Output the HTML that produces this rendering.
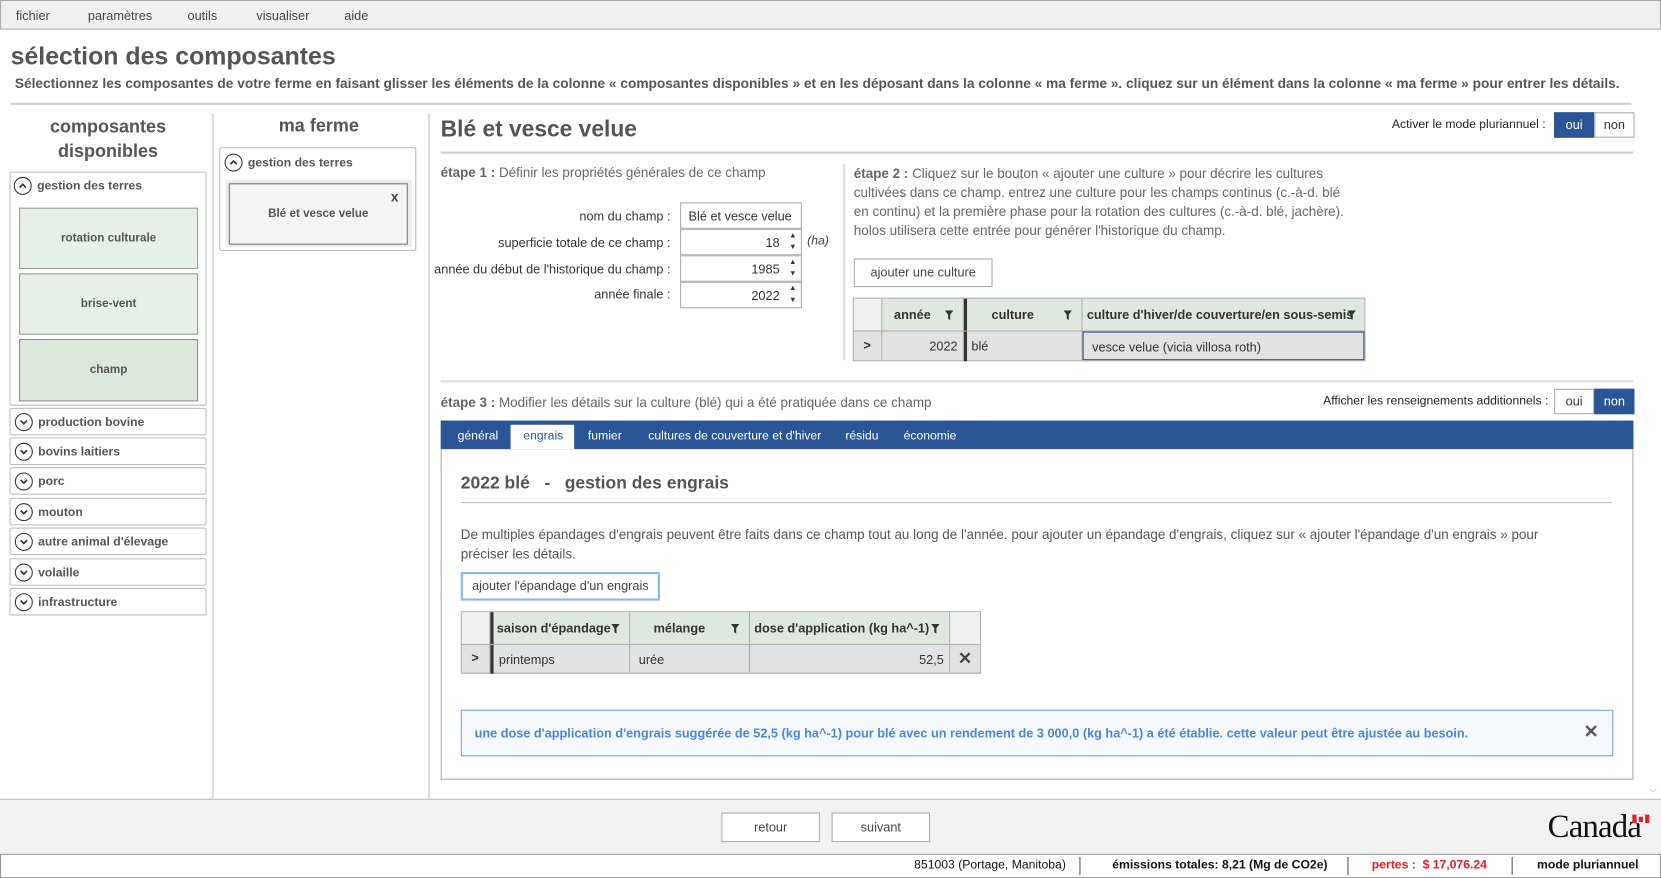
<!DOCTYPE html>
<html><head><meta charset="utf-8">
<style>
*{box-sizing:border-box;margin:0;padding:0}
html,body{width:1661px;height:878px;overflow:hidden;background:#fff}
#w{position:absolute;left:0;top:0;width:1568px;height:829px;transform:scale(1.0593);transform-origin:0 0;font-family:"Liberation Sans",sans-serif;font-size:12px;color:#444}
.a{position:absolute;white-space:nowrap}
.b{font-weight:bold}
.menu{left:0;top:0;width:1568px;height:28px;background:#f0f0f0;border:1px solid #aaa}
.box{position:absolute;border:1px solid #bbb;border-radius:2px;background:#fff}
.tile{position:absolute;border:1px solid #999;background:#e7f0e7;font-weight:bold;color:#555;text-align:center;font-size:11px}
.cat{position:absolute;left:9px;width:186px;height:26px;border:1px solid #bbb;border-radius:2px;font-weight:bold;font-size:11.5px;color:#555;padding:7px 0 0 26px}
.ci{position:absolute;left:4px;top:4px;width:17px;height:17px;border:1.3px solid #333;border-radius:50%}
.ci svg{position:absolute;left:3px;top:3px}
.inp{position:absolute;left:642px;width:115px;height:25px;border:1px solid #aaa;background:#fff;font-size:12px;color:#333}
.lbl{position:absolute;right:935px;font-size:12px;color:#333;text-align:right}
.tog{position:absolute;width:38px;height:24px;border:1px solid #aaa;text-align:center;line-height:22px;font-size:12px;color:#333;background:#fff}
.sel{background:#2a5597;color:#fff;border-color:#2a5597}
.th{position:absolute;background:#dfe8df;font-weight:bold;color:#333;font-size:12px;border-right:1px solid #aaa;height:100%}
.td{position:absolute;background:#e2e2e2;color:#333;font-size:12px;border-right:1px solid #aaa;height:100%}
.btn{position:absolute;border:1px solid #aaa;background:#fff;text-align:center;font-size:12px;color:#444}
.f{position:absolute;top:11px;right:9px}
</style></head><body><div id="w">
<div class="a menu"></div>
<div class="a" style="left:15px;top:8px">fichier</div>
<div class="a" style="left:83px;top:8px">paramètres</div>
<div class="a" style="left:177px;top:8px">outils</div>
<div class="a" style="left:242px;top:8px">visualiser</div>
<div class="a" style="left:325px;top:8px">aide</div>

<div class="a b" style="left:10px;top:40px;font-size:23.5px;color:#555">sélection des composantes</div>
<div class="a b" style="left:14px;top:71px;font-size:12.95px;color:#555">Sélectionnez les composantes de votre ferme en faisant glisser les éléments de la colonne « composantes disponibles » et en les déposant dans la colonne « ma ferme ». cliquez sur un élément dans la colonne « ma ferme » pour entrer les détails.</div>
<div class="a" style="left:10px;top:97px;width:1530px;height:2px;background:#ccc"></div>
<div class="a" style="left:200px;top:107px;width:2px;height:648px;background:#ddd"></div>
<div class="a" style="left:404px;top:107px;width:2px;height:648px;background:#ddd"></div>

<div class="a b" style="left:0;width:204px;top:108px;text-align:center;font-size:17px;line-height:23px;color:#555;white-space:normal">composantes<br>disponibles</div>
<div class="box" style="left:9px;top:162px;width:186px;height:221px"></div>
<div class="cat" style="top:163px;border:none"><div class="ci"><svg width="9" height="9" viewBox="0 0 9 9"><path d="M1.5 6 L4.5 3 L7.5 6" stroke="#333" stroke-width="1.6" fill="none"/></svg></div>gestion des terres</div>
<div class="tile" style="left:18px;top:196px;width:169px;height:58px;line-height:56px">rotation culturale</div>
<div class="tile" style="left:18px;top:258px;width:169px;height:58px;line-height:56px">brise-vent</div>
<div class="tile" style="left:18px;top:320px;width:169px;height:59px;line-height:57px;background:#dde8dd;border-color:#888">champ</div>

<div class="cat" style="top:385px"><div class="ci"><svg width="9" height="9" viewBox="0 0 9 9"><path d="M1.5 3 L4.5 6 L7.5 3" stroke="#333" stroke-width="1.6" fill="none"/></svg></div>production bovine</div>
<div class="cat" style="top:413px"><div class="ci"><svg width="9" height="9" viewBox="0 0 9 9"><path d="M1.5 3 L4.5 6 L7.5 3" stroke="#333" stroke-width="1.6" fill="none"/></svg></div>bovins laitiers</div>
<div class="cat" style="top:441px"><div class="ci"><svg width="9" height="9" viewBox="0 0 9 9"><path d="M1.5 3 L4.5 6 L7.5 3" stroke="#333" stroke-width="1.6" fill="none"/></svg></div>porc</div>
<div class="cat" style="top:470px"><div class="ci"><svg width="9" height="9" viewBox="0 0 9 9"><path d="M1.5 3 L4.5 6 L7.5 3" stroke="#333" stroke-width="1.6" fill="none"/></svg></div>mouton</div>
<div class="cat" style="top:498px"><div class="ci"><svg width="9" height="9" viewBox="0 0 9 9"><path d="M1.5 3 L4.5 6 L7.5 3" stroke="#333" stroke-width="1.6" fill="none"/></svg></div>autre animal d'élevage</div>
<div class="cat" style="top:527px"><div class="ci"><svg width="9" height="9" viewBox="0 0 9 9"><path d="M1.5 3 L4.5 6 L7.5 3" stroke="#333" stroke-width="1.6" fill="none"/></svg></div>volaille</div>
<div class="cat" style="top:555px"><div class="ci"><svg width="9" height="9" viewBox="0 0 9 9"><path d="M1.5 3 L4.5 6 L7.5 3" stroke="#333" stroke-width="1.6" fill="none"/></svg></div>infrastructure</div>

<div class="a b" style="left:206px;width:190px;top:109px;text-align:center;font-size:17px;color:#555">ma ferme</div>
<div class="box" style="left:207px;top:139px;width:186px;height:98px"></div>
<div class="cat" style="left:208px;top:141px;border:none"><div class="ci"><svg width="9" height="9" viewBox="0 0 9 9"><path d="M1.5 6 L4.5 3 L7.5 6" stroke="#333" stroke-width="1.6" fill="none"/></svg></div>gestion des terres</div>
<div class="a" style="left:213px;top:170px;width:176px;height:63px;background:#ececec"></div>
<div class="tile" style="left:216px;top:173px;width:169px;height:58px;line-height:56px;background:#f4f4f4;border-color:#777">Blé et vesce velue</div>
<div class="a b" style="left:369px;top:178px;font-size:13px;color:#444">x</div>

<div class="a b" style="left:416px;top:110px;font-size:21.5px;color:#555">Blé et vesce velue</div>
<div class="a" style="left:1314px;top:112px;font-size:11.5px;color:#222">Activer le mode pluriannuel :</div>
<div class="tog sel" style="left:1467px;top:106px">oui</div>
<div class="tog" style="left:1505px;top:106px">non</div>
<div class="a" style="left:416px;top:143px;width:1126px;height:2px;background:#ccc"></div>

<div class="a" style="left:416px;top:156px;font-size:12.7px;color:#666"><b>étape 1 :</b> Définir les propriétés générales de ce champ</div>
<div class="lbl" style="top:197px">nom du champ :</div>
<div class="lbl" style="top:222px">superficie totale de ce champ :</div>
<div class="lbl" style="top:247px">année du début de l'historique du champ :</div>
<div class="lbl" style="top:271px">année finale :</div>
<div class="inp" style="top:191px;padding:5px 7px">Blé et vesce velue</div>
<div class="inp" style="top:216px;text-align:right;padding:5px 20px">18</div>
<div class="inp" style="top:241px;text-align:right;padding:5px 20px">1985</div>
<div class="inp" style="top:266px;text-align:right;padding:5px 20px">2022</div>
<div class="a" style="left:745px;top:217px;font-size:7px;line-height:11px;color:#333">▲<br>▼</div>
<div class="a" style="left:745px;top:242px;font-size:7px;line-height:11px;color:#333">▲<br>▼</div>
<div class="a" style="left:745px;top:267px;font-size:7px;line-height:11px;color:#333">▲<br>▼</div>
<div class="a" style="left:762px;top:222px;font-style:italic;font-size:11.5px;color:#444">(ha)</div>
<div class="a" style="left:796px;top:155px;width:2px;height:185px;background:#ddd"></div>

<div class="a" style="left:806px;top:155px;font-size:12.7px;line-height:18px;color:#666;white-space:normal;width:476px"><b>étape 2 :</b> Cliquez sur le bouton « ajouter une culture » pour décrire les cultures cultivées dans ce champ. entrez une culture pour les champs continus (c.-à-d. blé en continu) et la première phase pour la rotation des cultures (c.-à-d. blé, jachère). holos utilisera cette entrée pour générer l'historique du champ.</div>
<div class="btn" style="left:806px;top:244px;width:131px;height:27px;line-height:25px">ajouter une culture</div>

<div class="a" style="left:805px;top:281px;width:484px;height:60px;border:1px solid #aaa;background:#f0f0f0"></div>
<div class="a" style="left:806px;top:282px;width:482px;height:30px">
 <div class="th" style="left:0;width:27px;background:#f0f0f0"></div>
 <div class="th" style="left:27px;width:77px;padding:8px 0 0 11px">année<svg class="f" width="8" height="9" viewBox="0 0 8 9"><path d="M0 0H8L5 4V9L3 8V4Z" fill="#333"/></svg></div>
 <div class="a" style="left:104px;top:0;width:3px;height:30px;background:#333"></div>
 <div class="th" style="left:107px;width:109px;padding:8px 0 0 23px">culture<svg class="f" width="8" height="9" viewBox="0 0 8 9"><path d="M0 0H8L5 4V9L3 8V4Z" fill="#333"/></svg></div>
 <div class="th" style="left:216px;width:266px;padding:8px 0 0 4px;border-right:none">culture d'hiver/de couverture/en sous-semis<svg class="f" width="8" height="9" viewBox="0 0 8 9" style="right:8px"><path d="M0 0H8L5 4V9L3 8V4Z" fill="#333"/></svg></div>
</div>
<div class="a" style="left:806px;top:312px;width:482px;height:28px;border-top:1px solid #aaa">
 <div class="td" style="left:0;width:27px;padding:6px 0 0 9px;font-weight:bold">&gt;</div>
 <div class="td" style="left:27px;width:77px;text-align:right;padding:7px 5px 0 0">2022</div>
 <div class="a" style="left:104px;top:0;width:3px;height:28px;background:#333"></div>
 <div class="td" style="left:107px;width:109px;padding:7px 0 0 4px">blé</div>
 <div class="td" style="left:216px;width:266px;padding:7px 0 0 8px;border:1px solid #2a5597">vesce velue (vicia villosa roth)</div>
</div>

<div class="a" style="left:416px;top:359px;width:1126px;height:2px;background:#ddd"></div>
<div class="a" style="left:416px;top:373px;font-size:12.7px;color:#666"><b>étape 3 :</b> Modifier les détails sur la culture (blé) qui a été pratiquée dans ce champ</div>
<div class="a" style="left:1249px;top:373px;font-size:11.5px;color:#222">Afficher les renseignements additionnels :</div>
<div class="tog" style="left:1467px;top:367px">oui</div>
<div class="tog sel" style="left:1505px;top:367px">non</div>

<div class="a" style="left:416px;top:397px;width:1126px;height:27px;background:#2a5597"></div>
<div class="a" style="left:482px;top:401px;width:60px;height:23px;background:#fff"></div>
<div class="a" style="left:432px;top:406px;color:#fff;font-size:11.5px">général</div>
<div class="a" style="left:494px;top:406px;color:#2a5597;font-size:11.5px">engrais</div>
<div class="a" style="left:555px;top:406px;color:#fff;font-size:11.5px">fumier</div>
<div class="a" style="left:612px;top:406px;color:#fff;font-size:11.5px">cultures de couverture et d'hiver</div>
<div class="a" style="left:798px;top:406px;color:#fff;font-size:11.5px">résidu</div>
<div class="a" style="left:853px;top:406px;color:#fff;font-size:11.5px">économie</div>
<div class="a" style="left:416px;top:424px;width:1126px;height:312px;border:1px solid #aaa;border-top:none"></div>

<div class="a b" style="left:435px;top:447px;font-size:16.5px;color:#555">2022 blé&nbsp;&nbsp;&nbsp;-&nbsp;&nbsp;&nbsp;gestion des engrais</div>
<div class="a" style="left:435px;top:474px;width:1087px;height:1px;background:#bbb"></div>
<div class="a" style="left:435px;top:496px;width:1062px;font-size:12.7px;line-height:18px;color:#555;white-space:normal">De multiples épandages d'engrais peuvent être faits dans ce champ tout au long de l'année. pour ajouter un épandage d'engrais, cliquez sur « ajouter l'épandage d'un engrais » pour préciser les détails.</div>
<div class="btn" style="left:435px;top:540px;width:188px;height:27px;line-height:23px;border:2px solid #85b8f2">ajouter l'épandage d'un engrais</div>

<div class="a" style="left:435px;top:577px;width:491px;height:59px;border:1px solid #aaa;border-bottom:2px solid #aaa;background:#f0f0f0"></div>
<div class="a" style="left:436px;top:578px;width:489px;height:30px">
 <div class="th" style="left:0;width:27px;background:#f0f0f0"></div>
 <div class="a" style="left:27px;top:0;width:3px;height:30px;background:#333"></div>
 <div class="th" style="left:30px;width:129px;padding:8px 0 0 3px">saison d'épandage<svg class="f" width="8" height="9" viewBox="0 0 8 9"><path d="M0 0H8L5 4V9L3 8V4Z" fill="#333"/></svg></div>
 <div class="th" style="left:159px;width:113px;padding:8px 0 0 22px">mélange<svg class="f" width="8" height="9" viewBox="0 0 8 9"><path d="M0 0H8L5 4V9L3 8V4Z" fill="#333"/></svg></div>
 <div class="th" style="left:272px;width:189px;padding:8px 0 0 4px">dose d'application (kg ha^-1)<svg class="f" width="8" height="9" viewBox="0 0 8 9"><path d="M0 0H8L5 4V9L3 8V4Z" fill="#333"/></svg></div>
 <div class="th" style="left:461px;width:28px;background:#f0f0f0;border:none"></div>
</div>
<div class="a" style="left:436px;top:608px;width:489px;height:27px;border-top:1px solid #aaa">
 <div class="td" style="left:0;width:27px;padding:5px 0 0 9px;font-weight:bold">&gt;</div>
 <div class="a" style="left:27px;top:0;width:3px;height:27px;background:#333"></div>
 <div class="td" style="left:30px;width:129px;padding:7px 0 0 5px">printemps</div>
 <div class="td" style="left:159px;width:113px;padding:7px 0 0 8px">urée</div>
 <div class="td" style="left:272px;width:189px;text-align:right;padding:7px 5px 0 0">52,5</div>
 <div class="td" style="left:461px;width:28px;border:none;text-align:center;font-size:16px;font-weight:bold;padding-top:3px;color:#444">✕</div>
</div>

<div class="a" style="left:435px;top:670px;width:1088px;height:44px;border:1px solid #6c9ee8;background:#f5f8fd"></div>
<div class="a b" style="left:448px;top:685px;font-size:12px;color:#4a86e0">une dose d'application d'engrais suggérée de 52,5 (kg ha^-1) pour blé avec un rendement de 3 000,0 (kg ha^-1) a été établie. cette valeur peut être ajustée au besoin.</div>
<div class="a b" style="left:1495px;top:681px;font-size:17px;color:#555">✕</div>

<div class="a" style="left:1557px;top:740px;font-size:9px;color:#bbb">⌵</div>
<div class="a" style="left:0;top:754px;width:1568px;height:52px;background:#f2f2f2;border-top:1px solid #bbb"></div>
<div class="btn" style="left:681px;top:767px;width:93px;height:28px;line-height:26px">retour</div>
<div class="btn" style="left:785px;top:767px;width:93px;height:28px;line-height:26px">suivant</div>
<div class="a" style="left:1461px;top:762px;font-family:'Liberation Serif',serif;font-size:31px;color:#111;letter-spacing:-0.8px">Canada</div>
<div class="a" style="left:1541px;top:769px;width:16px;height:8px;background:#e0232b"></div>
<div class="a" style="left:1545px;top:769px;width:8px;height:8px;background:#fff"></div>
<div class="a" style="left:1547px;top:771px;width:4px;height:5px;background:#e0232b"></div>

<div class="a" style="left:0;top:806px;width:1568px;height:23px;background:#fff;border:1px solid #999"></div>
<div class="a" style="left:863px;top:811px;font-size:11.5px;color:#111">851003 (Portage, Manitoba)</div>
<div class="a" style="left:1019px;top:809px;width:1px;height:17px;background:#555"></div>
<div class="a b" style="left:1050px;top:811px;font-size:11.5px;color:#111">émissions totales: 8,21 (Mg de CO2e)</div>
<div class="a" style="left:1272px;top:809px;width:1px;height:17px;background:#555"></div>
<div class="a b" style="left:1295px;top:811px;font-size:11.5px;color:#e8191d">pertes :&nbsp; $ 17,076.24</div>
<div class="a" style="left:1427px;top:809px;width:1px;height:17px;background:#555"></div>
<div class="a b" style="left:1451px;top:811px;font-size:11.5px;color:#111">mode pluriannuel</div>
</div></body></html>
